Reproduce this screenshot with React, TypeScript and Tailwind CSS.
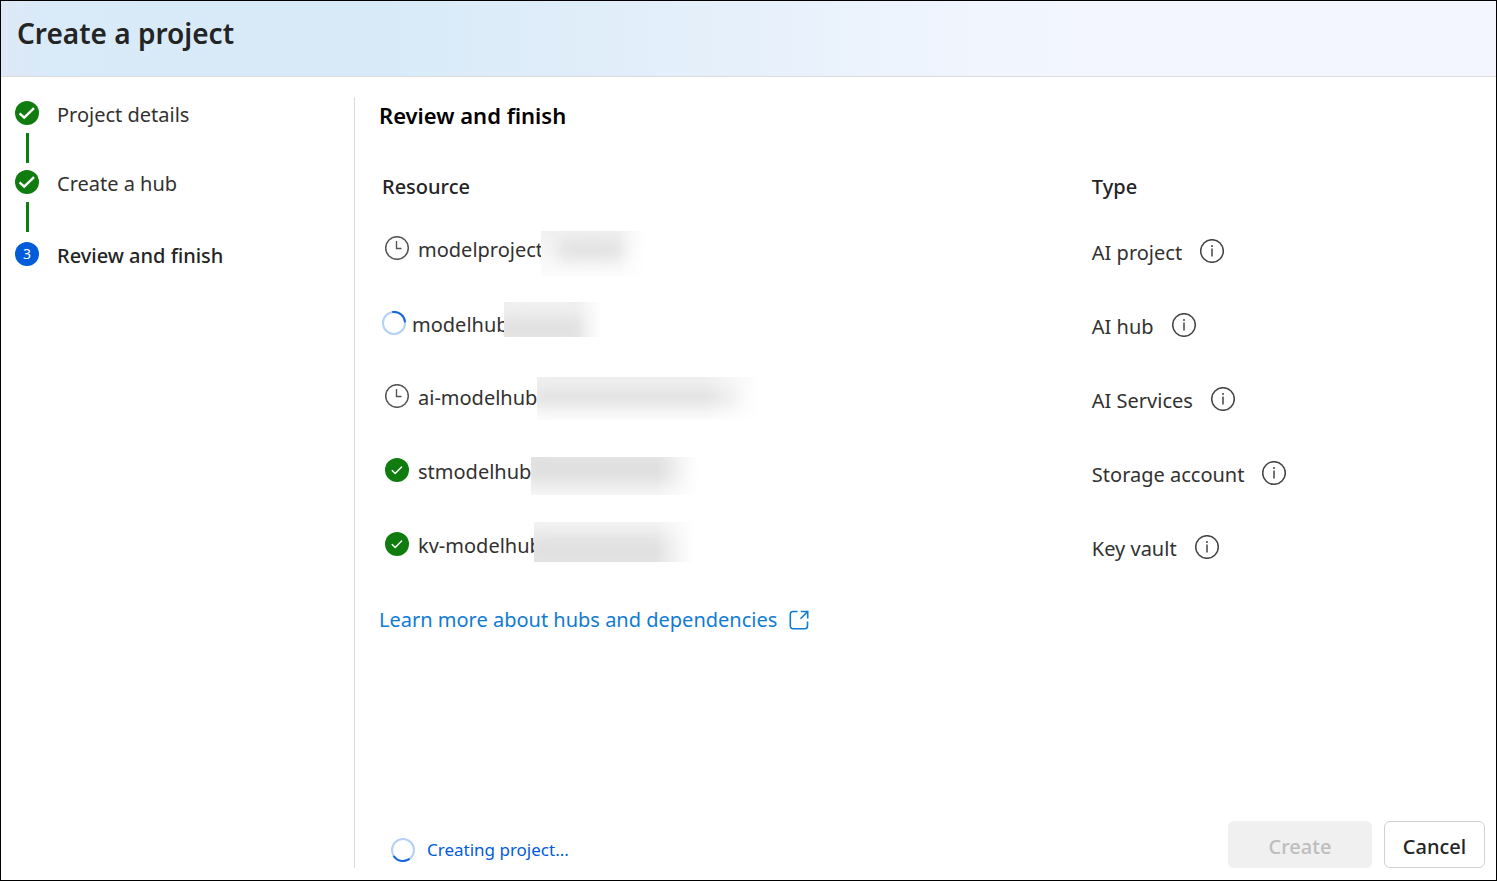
import React from "react";

type Status = "waiting" | "running" | "done";

function CheckBadge({ bold = false }: { bold?: boolean }) {
  return (
    <svg viewBox="0 0 24 24" className="size-6 shrink-0" aria-hidden="true">
      <circle cx="12" cy="12" r="12" fill="#107c10" />
      {bold ? (
        <path d="M4.6 12.4l4.6 4.2L19 7.2" fill="none" stroke="#fff" strokeWidth="2.4" />
      ) : (
        <path
          d="M7.2 12.6l3 2.9 6.4-6.4"
          fill="none"
          stroke="#fff"
          strokeWidth="1.4"
          strokeLinecap="round"
          strokeLinejoin="round"
        />
      )}
    </svg>
  );
}

function ClockIcon() {
  return (
    <svg viewBox="0 0 24 24" className="size-6 shrink-0" fill="none" stroke="#555" aria-hidden="true">
      <circle cx="12" cy="12" r="11.3" strokeWidth="1.5" />
      <path d="M11.5 5v7.5h5" strokeWidth="1.4" />
    </svg>
  );
}

function Spinner({ arc }: { arc: string }) {
  return (
    <svg viewBox="0 0 24 24" className="size-6 shrink-0" fill="none" aria-hidden="true">
      <circle cx="12" cy="12" r="11" stroke="#b4d0f5" strokeWidth="2" />
      <path d={arc} stroke="#1668dc" strokeWidth="2" strokeLinecap="round" />
    </svg>
  );
}

function InfoIcon() {
  return (
    <svg viewBox="0 0 24 24" className="size-6 shrink-0" fill="none" stroke="#444" aria-hidden="true">
      <circle cx="12" cy="12" r="11.3" strokeWidth="1.5" />
      <path d="M12 9.6V17.6" strokeWidth="1.5" />
      <circle cx="12" cy="7" r="1" fill="#444" stroke="none" />
    </svg>
  );
}

function ExternalIcon() {
  return (
    <svg viewBox="0 0 20 20" className="size-5 shrink-0" fill="none" stroke="currentColor" strokeWidth="1.6" aria-hidden="true">
      <path d="M8.5 1.5H4a2.7 2.7 0 0 0-2.7 2.7V16A2.7 2.7 0 0 0 4 18.7h11.8a2.7 2.7 0 0 0 2.7-2.7v-4.5" />
      <path d="M11.8 1.5h6.9v6.9M18.5 1.7l-7 7" />
    </svg>
  );
}

const resources: { name: string; type: string; status: Status; mask: string; smudge: string }[] = [
  {
    name: "modelproject",
    type: "AI project",
    status: "waiting",
    mask: "left-[162px] top-[18px] h-[45px] w-[104px] from-[#f1f1f1] to-[#fcfcfc]",
    smudge: "left-4 right-5 top-2 h-5 bg-[#e0e0e0]",
  },
  {
    name: "modelhub",
    type: "AI hub",
    status: "running",
    mask: "left-[125px] top-[15px] h-[35px] w-[98px] from-[#f1f1f1] to-[#eeeeee]",
    smudge: "-left-2 right-4 top-4 h-6 bg-[#e0e0e0]",
  },
  {
    name: "ai-modelhub",
    type: "AI Services",
    status: "waiting",
    mask: "left-[158px] top-[16px] h-[43px] w-[225px] from-[#f0f0f0] to-[#fcfcfc]",
    smudge: "-left-2 right-4 top-3 h-4 bg-[#dedede]",
  },
  {
    name: "stmodelhub",
    type: "Storage account",
    status: "done",
    mask: "left-[152px] top-[22px] h-[38px] w-[168px] from-[#e6e6e6] to-[#f6f6f6]",
    smudge: "-left-2 right-4 top-0 h-6 bg-[#dedede]",
  },
  {
    name: "kv-modelhub",
    type: "Key vault",
    status: "done",
    mask: "left-[155px] top-[13px] h-[40px] w-[160px] from-[#f3f3f3] to-[#e6e6e6]",
    smudge: "-left-2 right-4 top-4 h-6 bg-[#dfdfdf]",
  },
];

const steps = [
  { label: "Project details", done: true, box: "h-[69px]" },
  { label: "Create a hub", done: true, box: "h-[72px]" },
  { label: "Review and finish", done: false, box: "" },
];

export default function App() {
  return (
    <div className="flex min-h-screen flex-col border border-black bg-white font-['Noto_Sans','Open_Sans',sans-serif] text-[20px] leading-7 text-[#323130]">
      <header className="border-b border-[#dcdcdc] bg-[linear-gradient(90deg,#dfe8f7_0%,#d9eaf8_3%,#d8eaf8_25%,#e3effa_45%,#f0f5fe_65%,#f3f6ff_72%,#f3f6ff_100%)] px-4 pt-3 pb-[23px]">
        <h1 className="text-[28px] leading-10 font-semibold text-[#242424]">Create a project</h1>
      </header>

      <div className="flex flex-1 pt-5 pb-3">
        <nav aria-label="Steps" className="w-[354px] shrink-0 border-r border-[#dcdcdc] pt-1 pl-[14px]">
          <ol>
            {steps.map((step, i) => (
              <li key={step.label} className={`flex items-start gap-[18px] ${step.box}`}>
                <div className="flex flex-col items-center gap-2">
                  {step.done ? (
                    <>
                      <CheckBadge bold />
                      <span className="h-[30px] w-[3px] bg-[#107c10]" />
                    </>
                  ) : (
                    <span className="flex size-6 items-center justify-center rounded-full bg-[#015cda] text-[14px] leading-6 text-white">
                      {i + 1}
                    </span>
                  )}
                </div>
                <span className={step.done ? "" : "font-medium text-[#242424]"}>{step.label}</span>
              </li>
            ))}
          </ol>
        </nav>

        <main className="flex min-w-0 flex-1 flex-col pr-[11px] pl-6">
          <h2 className="pt-0.5 text-[22px] leading-8 font-semibold text-black">Review and finish</h2>

          <table className="mt-[30px] w-full table-fixed border-collapse text-left">
            <thead>
              <tr className="h-[52px]">
                <th className="w-[64%] pl-[3px] font-medium text-[#242424]">Resource</th>
                <th className="pl-[5px] font-medium text-[#242424]">Type</th>
              </tr>
            </thead>
            <tbody>
              {resources.map((r) => (
                <tr key={r.name} className="h-[74px]">
                  <td className="relative p-0">
                    <div className={r.status === "running" ? "flex items-start gap-[6px] pt-0.5 pl-[3px]" : "flex items-start gap-[9px] pl-[6px]"}>
                      {r.status === "waiting" && <ClockIcon />}
                      {r.status === "running" && <Spinner arc="M11 1A11 11 0 0 1 23 10.5" />}
                      {r.status === "done" && <CheckBadge />}
                      <span>{r.name}</span>
                    </div>
                    <div
                      className={`absolute overflow-hidden bg-linear-to-b mask-r-from-75% mask-r-to-100% ${r.mask}`}
                      aria-hidden="true"
                    >
                      <div className={`absolute rounded-lg blur-[8px] ${r.smudge}`} />
                    </div>
                  </td>
                  <td className="p-0 pt-1.5 pl-[5px]">
                    <div className="flex items-start gap-[18px]">
                      <span>{r.type}</span>
                      <button type="button" aria-label={`About ${r.type}`}>
                        <InfoIcon />
                      </button>
                    </div>
                  </td>
                </tr>
              ))}
            </tbody>
          </table>

          <a href="#hubs" className="mt-[23px] flex items-center gap-3 self-start text-[#0f7bd4]">
            Learn more about hubs and dependencies
            <ExternalIcon />
          </a>

          <footer className="mt-auto flex items-center">
            <div role="status" className="flex items-center gap-3 pt-2.5 pl-3 text-[17px] leading-6 text-[#015cda]">
              <Spinner arc="M18 21.2A11 11 0 0 1 3 18.5" />
              Creating project...
            </div>
            <div className="ml-auto flex gap-3 font-medium">
              <button type="button" disabled className="h-[47px] w-36 rounded-md bg-[#f0f0f0] pt-1 text-[#bdbdbd]">
                Create
              </button>
              <button type="button" className="h-[47px] w-[101px] rounded-md border border-[#d1d1d1] bg-white pt-1 text-[#242424]">
                Cancel
              </button>
            </div>
          </footer>
        </main>
      </div>
    </div>
  );
}
